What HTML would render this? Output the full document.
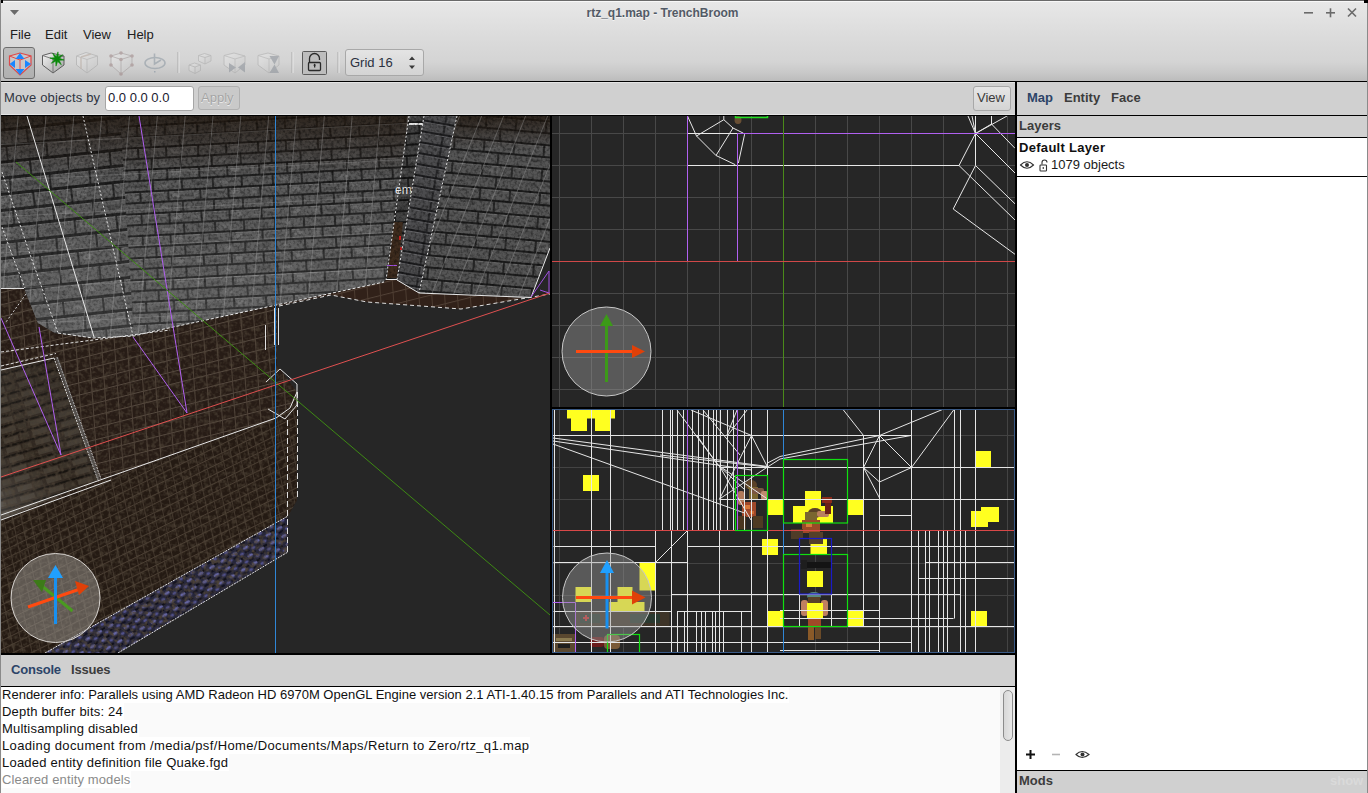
<!DOCTYPE html>
<html><head><meta charset="utf-8">
<style>
*{margin:0;padding:0;box-sizing:border-box}
html,body{width:1368px;height:793px;overflow:hidden;background:#d0d0d0;font-family:"Liberation Sans",sans-serif;font-size:13px;color:#1e1e1e}
.abs{position:absolute}
.tb{font-weight:bold;font-size:13px}
#top{left:0;top:0;width:1368px;height:81px;background:linear-gradient(#e8e8e8 0px,#dcdcdc 35px,#d4d4d4 62px,#c9c9c9 72px,#bcbcbc 81px)}
#title{left:0;top:6px;width:1325px;text-align:center;font-size:12px;font-weight:bold;color:#525a66;text-shadow:0 1px 0 #f4f4f4}
.menu{top:27px;font-size:13px;color:#202020}
#blk1{left:0;top:81px;width:1368px;height:1px;background:#000}
#movebar{left:1px;top:82px;width:1014px;height:33px;background:#d0d0d0;border-top:1px solid #e4e4e4;border-bottom:1px solid #e4e4e4}
#blk2{left:0;top:115px;width:1015px;height:1px;background:#000}
#vsep{left:1015px;top:81px;width:2px;height:712px;background:#000}
#leftedge{left:0;top:0;width:1px;height:793px;background:#8a8a8a}
.btn{background:linear-gradient(#e6e6e6,#d2d2d2);border:1px solid #a8a8a8;border-radius:3px;color:#3a3a3a}
#v3d{left:0px;top:115px;width:1015px;height:540px;background:#000}
#v2a{left:552px;top:116px;width:463px;height:291px;background:#262626;overflow:hidden}
#v2b{left:552px;top:409px;width:463px;height:244px;background:#262626;overflow:hidden}
#blk3{left:0;top:653px;width:1015px;height:2px;background:#000}
#contab{left:1px;top:655px;width:1014px;height:31px;background:#d0d0d0}
#blk4{left:0;top:686px;width:1015px;height:1px;background:#000}
#console{left:1px;top:687px;width:1014px;height:106px;background:#fafafa;overflow:hidden}
.cl{position:absolute;left:1px;font-size:13px;line-height:17px;color:#101010;white-space:nowrap;background:#fff;padding-right:1px}
#rp{left:1017px;top:82px;width:351px;height:711px;background:#fff}
</style></head><body>
<div id="top" class="abs"></div>
<div class="abs" style="left:0;top:0;width:1368px;height:1px;background:#6a6a6a"></div>
<div class="abs" style="left:1px;top:1px;width:1366px;height:1px;background:#f8f8f8"></div>
<div id="title" class="abs">rtz_q1.map - TrenchBroom</div>
<svg class="abs" style="left:9px;top:9px" width="11" height="8" viewBox="0 0 11 8"><polygon points="1,1 10,1 5.5,6" fill="#6a6a6a"/></svg>
<svg class="abs" style="left:1300px;top:6px" width="66" height="14" viewBox="0 0 66 14">
<rect x="4" y="6" width="9" height="1.6" fill="#6a6a6a"/>
<rect x="26" y="6" width="9" height="1.6" fill="#6a6a6a"/><rect x="29.7" y="2.3" width="1.6" height="9" fill="#6a6a6a"/>
<path d="M48,2.5 L56,10.5 M56,2.5 L48,10.5" stroke="#6a6a6a" stroke-width="1.6"/>
</svg>
<div class="abs menu" style="left:10px">File</div>
<div class="abs menu" style="left:45px">Edit</div>
<div class="abs menu" style="left:83px">View</div>
<div class="abs menu" style="left:127px">Help</div>
<div class="abs" style="left:3px;top:47px;width:32px;height:32px;border:1px solid #6e6e6e;border-radius:3px;background:linear-gradient(#bcbcbc,#b0b0b0)"></div>
<svg class="abs" style="left:0;top:44px" width="440" height="37" viewBox="0 44 440 37">
<defs>
<linearGradient id="cubeg" x1="0" y1="0" x2="1" y2="1"><stop offset="0" stop-color="#f4f4f4"/><stop offset="1" stop-color="#a0a0a0"/></linearGradient>
<linearGradient id="cubed" x1="0" y1="0" x2="1" y2="1"><stop offset="0" stop-color="#ececec"/><stop offset="1" stop-color="#c4c4c4"/></linearGradient>
</defs>
<!-- icon1 -->
<polygon points="9.5,56 20,53 31,56 31,65 20,75 9.5,65" fill="#d8d0d0" fill-opacity="0.6" stroke="#e04848" stroke-width="1.2"/>
<line x1="9.5" y1="56" x2="20" y2="60" stroke="#e04848" stroke-width="1"/><line x1="31" y1="56" x2="20" y2="60" stroke="#e04848" stroke-width="1"/>
<line x1="20" y1="60" x2="20" y2="69" stroke="#e05050" stroke-width="1"/>
<polygon points="20,53 15.5,59 24.5,59" fill="#1a86ff"/>
<polygon points="20,75 15.5,69 24.5,69" fill="#1a86ff"/>
<polygon points="9.5,64 15,60 15,68" fill="#1a86ff"/>
<polygon points="31,64 25,60 25,68" fill="#1a86ff"/>
<!-- icon2 -->
<polygon points="42.5,55.5 51,53 64,56 64,65 53,73 42.5,65" fill="url(#cubeg)" stroke="#505050" stroke-width="0.9"/>
<polyline points="42.5,55.5 53,59 53,73" fill="none" stroke="#707070" stroke-width="0.9"/><line x1="53" y1="59" x2="64" y2="56" stroke="#707070" stroke-width="0.9"/>
<polygon points="58.00,51.87 58.32,56.76 62.75,54.67 59.52,58.35 64.13,60.00 59.24,60.32 61.33,64.75 57.65,61.52 56.00,66.13 55.68,61.24 51.25,63.33 54.48,59.65 49.87,58.00 54.76,57.68 52.67,53.25 56.35,56.48" fill="#0a880a" stroke="#0a880a" stroke-width="0.6" stroke-linejoin="round"/>
<!-- icon3 disabled cube -->
<g opacity="0.55">
<polygon points="76.5,56 86,52.5 97.5,56 97.5,65 87,73 76.5,65" fill="url(#cubed)" stroke="#a0a0a0" stroke-width="0.9"/>
<polyline points="76.5,56 87,59.5 87,73" fill="none" stroke="#a8a8a8" stroke-width="0.9"/><line x1="87" y1="59.5" x2="97.5" y2="56" stroke="#a8a8a8" stroke-width="0.9"/>
<line x1="81" y1="57" x2="81" y2="69" stroke="#b8aaa0" stroke-width="1.4"/><line x1="81" y1="57" x2="91" y2="54" stroke="#b8aaa0" stroke-width="1.4"/>
</g>
<!-- icon4 vertex cube -->
<g opacity="0.6">
<polygon points="111,56 121,53 132,56 132,65 121,74 111,65" fill="url(#cubed)" stroke="#a09898" stroke-width="0.9"/>
<polyline points="111,56 121,59.5 121,74" fill="none" stroke="#a09898" stroke-width="0.9"/><line x1="121" y1="59.5" x2="132" y2="56" stroke="#a09898" stroke-width="0.9"/>
<g fill="#a08a8a"><circle cx="111" cy="56" r="1.8"/><circle cx="121" cy="53" r="1.8"/><circle cx="132" cy="56" r="1.8"/><circle cx="121" cy="59.5" r="1.8"/><circle cx="111" cy="65" r="1.8"/><circle cx="132" cy="65" r="1.8"/><circle cx="121" cy="74" r="1.8"/></g>
</g>
<!-- icon5 rotate -->
<g opacity="0.55" fill="none" stroke="#8a96a0" stroke-width="1.6">
<ellipse cx="155" cy="63" rx="10" ry="5.5"/>
<polyline points="154.5,53.5 154.5,64 161,60"/>
</g>
<rect x="154" y="71" width="1.5" height="1.5" fill="#a0a8b0"/>
<!-- separators -->
<g><rect x="177.5" y="52" width="1" height="21" fill="#aaaaaa"/><rect x="178.5" y="52" width="1" height="21" fill="#e8e8e8"/>
<rect x="291.5" y="52" width="1" height="21" fill="#aaaaaa"/><rect x="292.5" y="52" width="1" height="21" fill="#e8e8e8"/>
<rect x="337.5" y="52" width="1" height="21" fill="#aaaaaa"/><rect x="338.5" y="52" width="1" height="21" fill="#e8e8e8"/></g>
<!-- icon6 two cubes -->
<g opacity="0.5" stroke="#9c9c9c" stroke-width="0.8">
<polygon points="189,65 194.5,63 200.5,65 200.5,70.5 195,73.5 189,70.5" fill="url(#cubed)"/>
<polyline points="189,65 195,67 195,73.5" fill="none"/><line x1="195" y1="67" x2="200.5" y2="65"/>
<polygon points="198.5,55.5 204.5,53.5 211,55.5 211,61 205,64 198.5,61" fill="url(#cubed)"/>
<polyline points="198.5,55.5 205,57.5 205,64" fill="none"/><line x1="205" y1="57.5" x2="211" y2="55.5"/>
</g>
<!-- icon7 -->
<g opacity="0.55">
<polygon points="224,55.5 234,53 245,56 245,65 235,73 224,65" fill="url(#cubed)" stroke="#a0a0a0" stroke-width="0.8"/>
<polyline points="224,55.5 235,59 235,73" fill="none" stroke="#a8a8a8" stroke-width="0.8"/><line x1="235" y1="59" x2="245" y2="56" stroke="#a8a8a8" stroke-width="0.8"/>
<polygon points="229,63 236,67.5 229,72.5" fill="#8a9098"/><polygon points="245,62 238,67.5 245,72.5" fill="#8a9098"/>
</g>
<!-- icon8 -->
<g opacity="0.55">
<polygon points="258,55.5 268,53 279,56 279,65 269,73 258,65" fill="url(#cubed)" stroke="#a0a0a0" stroke-width="0.8"/>
<polyline points="258,55.5 269,59 269,73" fill="none" stroke="#a8a8a8" stroke-width="0.8"/><line x1="269" y1="59" x2="279" y2="56" stroke="#a8a8a8" stroke-width="0.8"/>
<polygon points="269.5,56 279,56 274.5,64.5" fill="#8a9098"/><polygon points="269.5,73 279,73 274.5,64.5" fill="#8a9098"/>
</g>
<!-- lock button -->
<rect x="302.5" y="51.5" width="24" height="23" rx="1" fill="#bdbdbd" stroke="#5a5a5a"/>
<path d="M309.5,63 V58.5 a5,5 0 0 1 10,0 V60" fill="none" stroke="#2a2a2a" stroke-width="1.3"/>
<rect x="308.5" y="62.5" width="12" height="8" rx="1" fill="none" stroke="#2a2a2a" stroke-width="1.3"/>
<rect x="314" y="64.5" width="1.3" height="3" fill="#2a2a2a"/><polygon points="314.6,63.5 313.2,65.5 316,65.5" fill="#2a2a2a"/>
</svg>
<div class="abs" style="left:345px;top:49px;width:79px;height:27px;border:1px solid #a8a8a8;border-radius:3px;background:linear-gradient(#e4e4e4,#d4d4d4)"></div>
<div class="abs" style="left:350px;top:55px;font-size:13px;color:#2a3040">Grid 16</div>
<svg class="abs" style="left:407px;top:55px" width="10" height="16" viewBox="0 0 10 16"><polygon points="5,1.5 2,5 8,5" fill="#3a3a3a"/><polygon points="5,14 2,10.5 8,10.5" fill="#3a3a3a"/></svg>
<div id="blk1" class="abs"></div>
<div id="movebar" class="abs"></div>
<div class="abs" style="left:4px;top:90px;color:#2e3440;letter-spacing:0.15px">Move objects by</div>
<div class="abs" style="left:105px;top:86px;width:89px;height:25px;background:#fff;border:1px solid #a6a6a6;border-radius:3px"></div>
<div class="abs" style="left:108px;top:90px;color:#1a2030">0.0 0.0 0.0</div>
<div class="abs" style="left:198px;top:86px;width:42px;height:24px;background:#c9c9c9;border:1px solid #b0b0b0;border-radius:3px"></div>
<div class="abs" style="left:201px;top:90px;color:#a4a4a4;text-shadow:0 1px 0 #ececec">Apply</div>
<div class="abs" style="left:973px;top:86px;width:38px;height:25px;border:1px solid #a8a8a8;border-radius:3px;background:linear-gradient(#e6e6e6,#d4d4d4)"></div>
<div class="abs" style="left:977px;top:90px;color:#3a3a3a">View</div>
<div id="blk2" class="abs"></div>
<div id="v3d" class="abs"></div>
<svg class="abs" style="left:1px;top:116px" width="549" height="537" viewBox="1 116 549 537">
<defs>
<pattern id="brickA" width="60" height="22" patternUnits="userSpaceOnUse" patternTransform="rotate(-3)">
<rect width="60" height="22" fill="#585858"/>
<rect y="0" width="60" height="2" fill="#1c1c1c"/>
<rect y="11" width="60" height="2" fill="#202020"/>
<rect y="2" width="60" height="1" fill="#6c6c6c"/>
<rect x="9" y="2" width="2" height="9" fill="#262626"/>
<rect x="37" y="2" width="2" height="9" fill="#2a2a2a"/>
<rect x="22" y="13" width="2" height="9" fill="#262626"/>
<rect x="51" y="13" width="2" height="9" fill="#2a2a2a"/>
<rect x="2" y="5" width="6" height="3" fill="#636363"/>
<rect x="16" y="6" width="10" height="3" fill="#4a4a4a"/>
<rect x="42" y="4" width="8" height="4" fill="#686868"/>
<rect x="4" y="15" width="12" height="4" fill="#4c4c4c"/>
<rect x="30" y="16" width="8" height="3" fill="#666"/>
</pattern>
<pattern id="gridB" width="22" height="40" patternUnits="userSpaceOnUse" patternTransform="skewX(-22)">
<rect x="0" y="0" width="1" height="40" fill="#a8a8a8" opacity="0.35"/>
</pattern>
<pattern id="gridA" width="28" height="36" patternUnits="userSpaceOnUse" patternTransform="rotate(-3) skewX(-8)">
<rect x="0" y="0" width="1" height="36" fill="#b0b0b0" opacity="0.32"/>
<rect x="0" y="0" width="28" height="1" fill="#b0b0b0" opacity="0.25"/>
</pattern>
<pattern id="brickAL" width="80" height="32" patternUnits="userSpaceOnUse" patternTransform="rotate(-6)">
<rect width="80" height="32" fill="#585858"/>
<rect y="0" width="80" height="3" fill="#1c1c1c"/>
<rect y="16" width="80" height="3" fill="#202020"/>
<rect y="3" width="80" height="1" fill="#707070"/>
<rect y="19" width="80" height="1" fill="#6a6a6a"/>
<rect x="12" y="3" width="2" height="13" fill="#262626"/>
<rect x="50" y="3" width="2" height="13" fill="#2a2a2a"/>
<rect x="30" y="19" width="2" height="13" fill="#262626"/>
<rect x="70" y="19" width="2" height="13" fill="#2a2a2a"/>
<rect x="3" y="7" width="8" height="4" fill="#646464"/>
<rect x="22" y="8" width="14" height="4" fill="#4a4a4a"/>
<rect x="56" y="6" width="10" height="5" fill="#696969"/>
<rect x="5" y="23" width="16" height="5" fill="#4c4c4c"/>
<rect x="40" y="24" width="10" height="4" fill="#676767"/>
</pattern>
<pattern id="brickB" width="60" height="24" patternUnits="userSpaceOnUse" patternTransform="rotate(5)">
<rect width="60" height="24" fill="#555"/>
<rect y="0" width="60" height="2" fill="#1c1c1c"/>
<rect y="12" width="60" height="2" fill="#1e1e1e"/>
<rect y="2" width="60" height="1" fill="#6a6a6a"/>
<rect x="14" y="2" width="2" height="10" fill="#282828"/>
<rect x="44" y="2" width="2" height="10" fill="#2c2c2c"/>
<rect x="29" y="14" width="2" height="10" fill="#282828"/>
<rect x="22" y="6" width="9" height="3" fill="#616161"/>
<rect x="3" y="16" width="8" height="3" fill="#4a4a4a"/>
</pattern>
<pattern id="pillar" width="28" height="11" patternUnits="userSpaceOnUse" patternTransform="rotate(10)">
<rect width="28" height="11" fill="#4c4c4e"/>
<rect y="0" width="28" height="2" fill="#1e1e20"/>
<rect y="2" width="28" height="1" fill="#636366"/>
<rect x="11" y="3" width="2" height="8" fill="#2a2a2c"/>
<rect x="16" y="5" width="7" height="3" fill="#575759"/>
</pattern>
<pattern id="tile" width="13" height="12" patternUnits="userSpaceOnUse" patternTransform="matrix(0.97,-0.242,0.07,0.998,0,0)">
<rect width="13" height="12" fill="#271c16"/>
<rect x="0" y="0" width="13" height="1" fill="#564a40"/>
<rect x="0" y="0" width="1" height="12" fill="#4e4238"/>
</pattern>
<pattern id="tileF" width="9" height="8" patternUnits="userSpaceOnUse" patternTransform="rotate(-26) skewX(-14)">
<rect width="9" height="8" fill="#241a13"/>
<rect x="0" y="0" width="9" height="1" fill="#4a3e33"/>
<rect x="0" y="0" width="1" height="8" fill="#42372d"/>
</pattern>
<pattern id="blueP" width="13" height="9" patternUnits="userSpaceOnUse" patternTransform="rotate(-30)">
<rect width="13" height="9" fill="#26263a"/>
<ellipse cx="4" cy="3" rx="3" ry="1.6" fill="#6464a0"/>
<ellipse cx="10.5" cy="7" rx="2.2" ry="1.4" fill="#50508a"/>
<rect x="7" y="1" width="4" height="2" fill="#101018"/>
<rect x="1" y="6" width="5" height="2" fill="#121220"/>
</pattern>
<filter id="noiseB" x="0" y="0" width="100%" height="100%"><feTurbulence type="fractalNoise" baseFrequency="0.3" numOctaves="2" seed="7"/><feColorMatrix type="matrix" values="0 0 0 0 0.42  0 0 0 0 0.42  0 0 0 0 0.66  0 0 0 3.2 -1.55"/></filter>
<filter id="noiseT" x="0" y="0" width="100%" height="100%"><feTurbulence type="fractalNoise" baseFrequency="0.25" numOctaves="2" seed="11"/><feColorMatrix type="matrix" values="0 0 0 0 0.08  0 0 0 0 0.06  0 0 0 0 0.04  0 0 0 -3 1.75"/></filter>
<pattern id="brickC" width="30" height="10" patternUnits="userSpaceOnUse" patternTransform="rotate(-16)">
<rect width="30" height="10" fill="#2a2119"/>
<rect y="0" width="30" height="2" fill="#100c08"/>
<rect x="2" y="3" width="15" height="5" fill="#3e362c"/>
<rect x="19" y="3" width="9" height="5" fill="#342c22"/>
</pattern>
<linearGradient id="insetg" x1="0.6" y1="0" x2="0.2" y2="1"><stop offset="0" stop-color="#1a1410" stop-opacity="0.5"/><stop offset="0.6" stop-color="#808080" stop-opacity="0.05"/><stop offset="1" stop-color="#a0a0a0" stop-opacity="0.3"/></linearGradient>
<pattern id="blue" width="11" height="9" patternUnits="userSpaceOnUse" patternTransform="rotate(-30)">
<rect width="11" height="9" fill="#2e2e42"/>
<rect x="1" y="1" width="4" height="3" fill="#5e5e90"/>
<rect x="6" y="4" width="3" height="2" fill="#7878b0"/>
<rect x="4" y="6" width="4" height="2" fill="#18182a"/>
</pattern>
<filter id="noise" x="0" y="0" width="100%" height="100%"><feTurbulence type="fractalNoise" baseFrequency="0.35" numOctaves="2" seed="3"/><feColorMatrix type="matrix" values="0 0 0 0 0  0 0 0 0 0  0 0 0 0 0  0 0 0 -2.2 1.3"/></filter>
<linearGradient id="lowlight" gradientUnits="userSpaceOnUse" x1="0" y1="170" x2="0" y2="335"><stop offset="0" stop-color="#c8c8c8" stop-opacity="0"/><stop offset="1" stop-color="#c8c8c8" stop-opacity="0.16"/></linearGradient>
<linearGradient id="topdark" x1="0" y1="0" x2="0" y2="1">
<stop offset="0" stop-color="#22180f" stop-opacity="0.8"/>
<stop offset="1" stop-color="#241a14" stop-opacity="0"/>
</linearGradient>
<clipPath id="wallAclip"><polygon points="1,116 409,116 386,272 384,282 150,332 134,336 93,338 55,333 38,323 24,288 1,288"/></clipPath>
<clipPath id="wallBclip"><polygon points="409,116 550,116 550,248 531,298 419,293 397,280 386,280"/></clipPath>
</defs>
<rect x="1" y="116" width="549" height="537" fill="#262626"/>
<!-- brown platform -->
<polygon points="1,280 24,288 38,323 55,333 93,338 134,336 150,332 277,305 277,365 297,392 297,500 288,516 45,653 1,653" fill="url(#tile)"/>
<clipPath id="platclip"><polygon points="1,280 24,288 38,323 55,333 93,338 134,336 150,332 277,305 277,365 297,392 297,500 288,516 45,653 1,653"/></clipPath>
<polygon points="1,518 276,418 290,408 297,392 297,500 288,516 45,653 1,653" fill="url(#tileF)"/>
<rect x="1" y="280" width="297" height="373" fill="#000" filter="url(#noiseT)" opacity="0.6" clip-path="url(#platclip)"/>
<!-- inner brick inset lower left -->
<polygon points="1,370 54,358 98,480 1,520" fill="url(#brickC)"/>
<polygon points="1,370 54,358 98,480 1,520" fill="url(#insetg)"/>
<clipPath id="insetclip"><polygon points="1,370 54,358 98,480 1,520"/></clipPath>
<rect x="1" y="358" width="98" height="162" fill="#000" filter="url(#noiseT)" opacity="0.6" clip-path="url(#insetclip)"/>
<!-- blue strip -->
<clipPath id="blueclip"><polygon points="45,653 288,516 288,552 118,653"/></clipPath>
<polygon points="45,653 288,516 288,552 118,653" fill="url(#blueP)"/>
<rect x="45" y="516" width="244" height="137" fill="#000" filter="url(#noiseT)" opacity="0.85" clip-path="url(#blueclip)"/>
<!-- brown floor strip under right walls -->
<polygon points="277,305 384,282 386,280 397,280 419,293 531,298 550,290 550,294 461,309 421,306 367,302 331,295 277,306" fill="url(#tile)"/>
<polygon points="277,305 384,282 386,280 397,280 419,293 531,298 550,290 550,294 461,309 421,306 367,302 331,295 277,306" fill="#4a3020" opacity="0.3"/>
<!-- wall A -->
<polygon points="1,116 409,116 386,272 384,282 150,332 134,336 93,338 55,333 38,323 24,288 1,288" fill="url(#brickA)"/>
<polygon points="1,116 120,116 134,336 93,338 55,333 38,323 24,288 1,288" fill="url(#brickAL)"/>
<polygon points="1,116 409,116 400,175 1,175" fill="url(#topdark)"/>
<rect x="1" y="116" width="409" height="225" fill="#000" filter="url(#noise)" opacity="0.45" clip-path="url(#wallAclip)"/>
<rect x="1" y="116" width="409" height="225" fill="url(#gridA)" clip-path="url(#wallAclip)"/>
<rect x="1" y="116" width="560" height="225" fill="url(#lowlight)" clip-path="url(#wallAclip)"/>
<rect x="385" y="116" width="165" height="185" fill="url(#lowlight)" clip-path="url(#wallBclip)"/>
<!-- gap -->
<polygon points="409,116 424,116 397,280 386,280" fill="url(#brickA)"/>
<polygon points="409,116 424,116 397,280 386,280" fill="#000" opacity="0.25"/>
<polygon points="394,222 403,222 397,278 387,278" fill="#3e2c1e"/>
<text x="395" y="194" font-family="Liberation Sans" font-size="12" fill="#e8e8e8">em</text>
<rect x="409" y="123" width="15" height="2" fill="#e8e8e8"/>
<rect x="399" y="236" width="2" height="4" fill="#d02020"/><rect x="400" y="247" width="2" height="3" fill="#d02020"/>
<rect x="387" y="265" width="10" height="1" fill="#a050e0"/>
<!-- pillar face -->
<polygon points="424,116 457,116 419,293 397,280" fill="url(#pillar)"/>
<!-- wall B -->
<polygon points="457,116 550,116 550,248 531,298 419,293" fill="url(#brickB)"/>
<polygon points="457,116 550,116 550,150 450,150" fill="url(#topdark)"/>
<rect x="385" y="116" width="165" height="185" fill="#000" filter="url(#noise)" opacity="0.45" clip-path="url(#wallBclip)"/>
<polygon points="457,116 550,116 550,248 531,298 419,293" fill="url(#gridB)"/>
<!-- lines -->
<g fill="none" stroke-width="1">
<line x1="27" y1="116" x2="94" y2="337" stroke="#e8e8e8"/>
<line x1="83" y1="116" x2="133" y2="336" stroke="#e0e0e0" stroke-dasharray="2,2"/>
<polyline points="2,172 32,260 58,333" stroke="#e0e0e0" stroke-dasharray="2,2"/>
<polyline points="2,227 14,260 25,288" stroke="#e0e0e0" stroke-dasharray="2,2"/>
<line x1="26" y1="294" x2="6" y2="322" stroke="#d0d0d0" stroke-dasharray="2,2"/>
<polyline points="1,288.5 24,288.5" stroke="#e0e0e0"/>
<polyline points="58,333 93,338 134,336 150,332 384,282" stroke="#e8e8e8" stroke-dasharray="3,2"/>
<line x1="409" y1="116" x2="386" y2="280" stroke="#e0e0e0" stroke-dasharray="2,2"/>
<line x1="424" y1="116" x2="397" y2="280" stroke="#e0e0e0" stroke-dasharray="2,2"/>
<line x1="457" y1="116" x2="419" y2="293" stroke="#e0e0e0" stroke-dasharray="2,2"/>
<line x1="386" y1="279.5" x2="397" y2="279.5" stroke="#e8e8e8"/>
<polyline points="397,280 419,293 531,297.5 550,248" stroke="#e8e8e8"/>
<polyline points="279,306 331,295 367,302 421,306 461,309 550,294" stroke="#e0e0e0" stroke-dasharray="4,3"/>
<line x1="1" y1="352" x2="170" y2="330" stroke="#e0e0e0" stroke-dasharray="3,2"/>
<line x1="1" y1="370" x2="54" y2="358" stroke="#e8e8e8"/>
<line x1="1" y1="366" x2="56" y2="353.5" stroke="#d8d8d8" stroke-dasharray="3,2"/>
<line x1="54" y1="358" x2="98" y2="480" stroke="#e0e0e0" stroke-dasharray="2,1"/>
<line x1="57" y1="357" x2="101" y2="479" stroke="#d8d8d8" stroke-dasharray="2,1"/>
<polygon points="55,358 58,357 100,479 98,480" fill="#6a6a6a" opacity="0.6"/>
<line x1="1" y1="515" x2="276" y2="418" stroke="#e8e8e8"/>
<line x1="1" y1="520" x2="111" y2="480" stroke="#e8e8e8"/>
<polyline points="276,418 290,408 297,392" stroke="#e8e8e8"/>
<polyline points="266,382 280,369 297,384 297,405 285,419 268,409" stroke="#e0e0e0"/>
<line x1="274.5" y1="308" x2="274.5" y2="345" stroke="#e0e0e0"/>
<line x1="278.5" y1="308" x2="278.5" y2="345" stroke="#e0e0e0"/>
<line x1="265.5" y1="325" x2="265.5" y2="350" stroke="#e0e0e0"/>
<line x1="297.5" y1="392" x2="297.5" y2="500" stroke="#e0e0e0" stroke-dasharray="6,3"/>
<line x1="287.5" y1="420" x2="287.5" y2="552" stroke="#e0e0e0" stroke-dasharray="6,3"/>
<line x1="45" y1="653" x2="288" y2="516" stroke="#e0e0e0" stroke-dasharray="2,1"/>
<line x1="118" y1="653" x2="288" y2="552" stroke="#e0e0e0" stroke-dasharray="2,1"/>
<line x1="139" y1="116" x2="187" y2="413" stroke="#b060f0"/>
<line x1="133" y1="337" x2="187" y2="413" stroke="#b060f0"/>
<line x1="1" y1="318" x2="61" y2="455" stroke="#b060f0"/>
<line x1="39" y1="327" x2="61" y2="455" stroke="#b060f0"/>
<line x1="16" y1="162" x2="550" y2="615" stroke="#3e8a14"/>
<line x1="1" y1="477" x2="550" y2="293" stroke="#e05050"/>
<polyline points="531,297 549,271 549,293 540,290" stroke="#a050e0"/>
<line x1="275.5" y1="116" x2="275.5" y2="653" stroke="#2f86d6"/>
</g>
<!-- gizmo -->
<circle cx="55.5" cy="598" r="44.5" fill="#9a9590" fill-opacity="0.5" stroke="#d8d4d0" stroke-width="1"/>
<line x1="72.5" y1="611" x2="42" y2="586" stroke="#4a9a20" stroke-width="3"/>
<polygon points="33,580 46,580 42,592" fill="#3d7a18"/>
<line x1="28" y1="607" x2="80" y2="589" stroke="#ff4a10" stroke-width="3"/>
<polygon points="89,586 75,581 79,595" fill="#e04008"/>
<line x1="55.5" y1="624" x2="55.5" y2="576" stroke="#1890f0" stroke-width="3"/>
<polygon points="55.5,565 48,578 63,578" fill="#20a0ff"/>
</svg>

<svg class="abs" style="left:552px;top:116px" width="463" height="291" viewBox="552 116 463 291">
<rect x="552" y="116" width="463" height="291" fill="#262626"/>
<g stroke="#484848" stroke-width="1"><line x1="559.5" y1="116" x2="559.5" y2="407"/><line x1="591.5" y1="116" x2="591.5" y2="407"/><line x1="623.5" y1="116" x2="623.5" y2="407"/><line x1="655.5" y1="116" x2="655.5" y2="407"/><line x1="687.5" y1="116" x2="687.5" y2="407"/><line x1="719.5" y1="116" x2="719.5" y2="407"/><line x1="751.5" y1="116" x2="751.5" y2="407"/><line x1="783.5" y1="116" x2="783.5" y2="407"/><line x1="815.5" y1="116" x2="815.5" y2="407"/><line x1="847.5" y1="116" x2="847.5" y2="407"/><line x1="879.5" y1="116" x2="879.5" y2="407"/><line x1="911.5" y1="116" x2="911.5" y2="407"/><line x1="943.5" y1="116" x2="943.5" y2="407"/><line x1="975.5" y1="116" x2="975.5" y2="407"/><line x1="1007.5" y1="116" x2="1007.5" y2="407"/><line x1="552" y1="133.5" x2="1015" y2="133.5"/><line x1="552" y1="165.5" x2="1015" y2="165.5"/><line x1="552" y1="197.5" x2="1015" y2="197.5"/><line x1="552" y1="229.5" x2="1015" y2="229.5"/><line x1="552" y1="261.5" x2="1015" y2="261.5"/><line x1="552" y1="293.5" x2="1015" y2="293.5"/><line x1="552" y1="325.5" x2="1015" y2="325.5"/><line x1="552" y1="357.5" x2="1015" y2="357.5"/><line x1="552" y1="389.5" x2="1015" y2="389.5"/></g>
<g fill="none" stroke="#e8e8e8" stroke-width="1">
<line x1="687.5" y1="133.5" x2="737.5" y2="133.5"/>
<line x1="687.5" y1="165.5" x2="959" y2="165.5"/>
<polyline points="687.5,116 696.5,136 723.8,119.7 723.8,116"/>
<polyline points="723.8,119.7 733,128 743,133 744.6,134.3 738.4,163"/>
<polyline points="696.5,136 716,155.5 733,128"/>
<polyline points="716,155.5 735.3,164.7"/>
<polyline points="959,165.5 975.5,133.5 975.5,165.5 953.2,209 1015,254.3"/>
<line x1="975.5" y1="165.5" x2="1015" y2="203.8"/>
<polyline points="959,165.5 969.3,175.6 1015,220"/>
<line x1="975.5" y1="133.5" x2="1015" y2="173"/>
<polyline points="975.5,133.5 991.5,124 1015,148.3"/>
<polyline points="975.5,133.5 1007,116"/>
<polyline points="975.5,133.5 968,116"/>
<polyline points="975.5,133.5 972,116"/>
<line x1="975.5" y1="116" x2="975.5" y2="133.5"/>
<line x1="991.5" y1="116" x2="991.5" y2="124"/>
</g>
<g stroke="#b060f0" stroke-width="1" fill="none">
<line x1="687.5" y1="116" x2="687.5" y2="261"/>
<line x1="737.5" y1="133.5" x2="737.5" y2="261"/>
<line x1="737.5" y1="133.5" x2="1015" y2="133.5"/>
</g>
<line x1="783.5" y1="116" x2="783.5" y2="407" stroke="#4a8a1a"/>
<line x1="552" y1="261.5" x2="1015" y2="261.5" stroke="#d04848"/>
<ellipse cx="738" cy="120" rx="3.5" ry="4" fill="#7a5a38" opacity="0.8"/>
<polyline points="735.5,116 735.5,117.5 767.5,117.5 767.5,116" fill="none" stroke="#20e020" stroke-width="1.5"/>
<circle cx="606.5" cy="351.5" r="44.5" fill="#a0a0a0" fill-opacity="0.42" stroke="#c8c8c8" stroke-width="1"/>
<line x1="606.5" y1="382" x2="606.5" y2="324" stroke="#3c9a18" stroke-width="3"/>
<polygon points="606.5,314 600,326 613,326" fill="#3c9a18"/>
<line x1="576" y1="351.5" x2="635" y2="351.5" stroke="#ff4a10" stroke-width="3"/>
<polygon points="645,351.5 632,345 632,358" fill="#e04008"/>
</svg>

<svg class="abs" style="left:552px;top:409px" width="463" height="244" viewBox="552 409 463 244">
<rect x="552" y="409" width="463" height="244" fill="#262626"/>
<g stroke="#434343" stroke-width="1"><line x1="559.5" y1="409.5" x2="559.5" y2="652.5"/><line x1="591.5" y1="409.5" x2="591.5" y2="652.5"/><line x1="623.5" y1="409.5" x2="623.5" y2="652.5"/><line x1="655.5" y1="409.5" x2="655.5" y2="652.5"/><line x1="687.5" y1="409.5" x2="687.5" y2="652.5"/><line x1="719.5" y1="409.5" x2="719.5" y2="652.5"/><line x1="751.5" y1="409.5" x2="751.5" y2="652.5"/><line x1="783.5" y1="409.5" x2="783.5" y2="652.5"/><line x1="815.5" y1="409.5" x2="815.5" y2="652.5"/><line x1="847.5" y1="409.5" x2="847.5" y2="652.5"/><line x1="879.5" y1="409.5" x2="879.5" y2="652.5"/><line x1="911.5" y1="409.5" x2="911.5" y2="652.5"/><line x1="943.5" y1="409.5" x2="943.5" y2="652.5"/><line x1="975.5" y1="409.5" x2="975.5" y2="652.5"/><line x1="1007.5" y1="409.5" x2="1007.5" y2="652.5"/><line x1="552.5" y1="435.5" x2="1014.5" y2="435.5"/><line x1="552.5" y1="467.5" x2="1014.5" y2="467.5"/><line x1="552.5" y1="499.5" x2="1014.5" y2="499.5"/><line x1="552.5" y1="563.5" x2="1014.5" y2="563.5"/><line x1="552.5" y1="595.5" x2="1014.5" y2="595.5"/><line x1="552.5" y1="627.5" x2="1014.5" y2="627.5"/></g>






<g fill="#ffff20">
<polygon points="567,409.5 615,409.5 615,418.5 611,418.5 611,431 595,431 595,418.5 587,418.5 587,431 571,431 571,418.5 567,418.5"/>
<rect x="583" y="475" width="16" height="16"/>
<rect x="768" y="500" width="15" height="15"/>
<rect x="805" y="491" width="16" height="16"/>
<rect x="793" y="506" width="40" height="17"/>
<rect x="848" y="500" width="15" height="15"/>
<rect x="976" y="451" width="15" height="16"/>
<rect x="971" y="511" width="17" height="16"/>
<rect x="981" y="507" width="18" height="15"/>
<rect x="810.5" y="539" width="16.5" height="16"/>
<rect x="807" y="571" width="16" height="16"/>
<rect x="847.5" y="611" width="15.5" height="15.5"/>
<rect x="971" y="611" width="16" height="15.5"/>
<rect x="762" y="539" width="16" height="16"/>
<rect x="639.5" y="562.5" width="16" height="28"/>
<rect x="575.5" y="587" width="16" height="15"/>
<rect x="617.5" y="587" width="15" height="15"/>
<rect x="609.5" y="602" width="35" height="20"/>
<rect x="767" y="611" width="16" height="15"/>
</g>
<!-- monsters approx -->
<g>
<g>
<ellipse cx="751" cy="485" rx="6" ry="5" fill="#5a4228"/>
<rect x="748" y="487" width="10" height="13" fill="#7a6630"/>
<rect x="745" y="489" width="4" height="12" fill="#2a2a2a"/>
<rect x="738" y="491" width="6" height="14" rx="2" fill="#b07a5a"/>
<rect x="752" y="488" width="12" height="6" rx="2" fill="#7a5640"/>
<rect x="761" y="491" width="7" height="9" rx="2" fill="#c08a70"/>
<rect x="742" y="502" width="14" height="15" fill="#a0482a"/>
<rect x="745" y="505" width="5" height="4" fill="#d8783a"/>
<rect x="750" y="511" width="4" height="3" fill="#d06a30"/>
<rect x="737" y="516" width="9" height="13" fill="#4a3620"/>
<rect x="753" y="516" width="10" height="12" fill="#4e3a22"/>
</g>
<g>
<ellipse cx="815" cy="513" rx="7" ry="5" fill="#5a4228"/>
<rect x="805" y="512" width="12" height="9" fill="#7a6630"/>
<rect x="817" y="511" width="12" height="6" rx="2" fill="#b88060"/>
<rect x="825" y="500" width="6" height="14" fill="#6a2018"/>
<rect x="822" y="497" width="10" height="6" fill="#8a2a1a"/>
<rect x="802" y="520" width="18" height="13" fill="#9a4a28"/>
<rect x="806" y="523" width="6" height="4" fill="#d8783a"/>
<rect x="791" y="529" width="12" height="10" fill="#4e3c28"/>
<rect x="809" y="532" width="14" height="12" fill="#54402a"/>
</g>
<rect x="803" y="562" width="29" height="6" fill="#141414"/>
<rect x="801" y="560" width="6" height="9" fill="#1e1e1e"/>
<g>
<ellipse cx="814" cy="596" rx="7" ry="4" fill="#5a8a80"/>
<rect x="808" y="597" width="12" height="8" fill="#5a4228"/>
<rect x="801" y="600" width="7" height="16" rx="3" fill="#c08060"/>
<rect x="821" y="600" width="7" height="16" rx="3" fill="#c08060"/>
<rect x="808" y="617" width="13" height="9" fill="#a04a28"/>
<rect x="808" y="626" width="6" height="14" fill="#8a5a28"/>
<rect x="815" y="626" width="6" height="13" fill="#6a4a28"/>
</g>
</g>
<rect x="807" y="603" width="16" height="16" fill="#ffff20"/>
<rect x="553" y="634" width="22" height="18" fill="#5a4830"/>
<rect x="556" y="638" width="16" height="3" fill="#8a7a50"/><rect x="558" y="644" width="12" height="4" fill="#1e1e1e"/>
<rect x="590" y="637" width="14" height="10" rx="3" fill="#6a1a1a"/><rect x="604" y="635" width="16" height="14" rx="4" fill="#7a5a38"/>
<rect x="575.5" y="611" width="94" height="15" fill="#3e3428"/>
<rect x="580" y="614" width="20" height="9" fill="#2a3a30"/><rect x="630" y="614" width="30" height="9" fill="#2a3a30"/>
<rect x="583" y="617" width="6" height="2" fill="#c03030"/><rect x="585" y="615" width="2" height="6" fill="#c03030"/>
<g fill="none" stroke="#e6e6e6" stroke-width="1"><line x1="554.5" y1="409.5" x2="554.5" y2="652.5"/><line x1="591.5" y1="409.5" x2="591.5" y2="652.5"/><line x1="610.5" y1="409.5" x2="610.5" y2="652.5"/><line x1="662.5" y1="409.5" x2="662.5" y2="530.5"/><line x1="670.5" y1="409.5" x2="670.5" y2="530.5"/><line x1="672.5" y1="409.5" x2="672.5" y2="530.5"/><line x1="677.5" y1="409.5" x2="677.5" y2="530.5"/><line x1="683.5" y1="409.5" x2="683.5" y2="530.5"/><line x1="692.5" y1="409.5" x2="692.5" y2="530.5"/><line x1="698.5" y1="409.5" x2="698.5" y2="530.5"/><line x1="703.5" y1="409.5" x2="703.5" y2="530.5"/><line x1="708.5" y1="409.5" x2="708.5" y2="530.5"/><line x1="713.5" y1="409.5" x2="713.5" y2="530.5"/><line x1="716.5" y1="409.5" x2="716.5" y2="530.5"/><line x1="720.5" y1="409.5" x2="720.5" y2="530.5"/><line x1="727.5" y1="409.5" x2="727.5" y2="530.5"/><line x1="733.5" y1="409.5" x2="733.5" y2="530.5"/><line x1="744.5" y1="409.5" x2="744.5" y2="530.5"/><line x1="751.5" y1="409.5" x2="751.5" y2="530.5"/><line x1="767.5" y1="409.5" x2="767.5" y2="530.5"/><line x1="552.5" y1="435.5" x2="911.5" y2="435.5"/><line x1="719.5" y1="467.5" x2="1014.5" y2="467.5"/><line x1="719.5" y1="499.5" x2="1014.5" y2="499.5"/><line x1="553" y1="438" x2="767.5" y2="466.5"/><line x1="553" y1="444" x2="744.5" y2="513"/><line x1="553" y1="441" x2="751.5" y2="470"/><line x1="660" y1="455" x2="767.5" y2="467"/><line x1="767.5" y1="467" x2="780" y2="459"/><line x1="767.5" y1="463" x2="780" y2="456.5"/><line x1="751.5" y1="435.5" x2="719.5" y2="499"/><line x1="751.5" y1="435.5" x2="767.5" y2="467"/><line x1="691" y1="410" x2="751.5" y2="435.5"/><line x1="677" y1="410" x2="718" y2="465"/><line x1="696.5" y1="435" x2="718" y2="465"/><line x1="718" y1="465" x2="767.5" y2="499"/><line x1="767.5" y1="467" x2="719.5" y2="499"/><line x1="718" y1="465" x2="745" y2="490"/><line x1="747" y1="410" x2="728" y2="435"/><line x1="737" y1="410" x2="727" y2="435"/><line x1="720" y1="467" x2="751" y2="520"/><line x1="703" y1="410" x2="740" y2="455"/><line x1="780" y1="456.5" x2="879.5" y2="435.5"/><line x1="780" y1="459" x2="911" y2="435.5"/><polyline points="942.5,409.5 879.5,435.5 911.5,467.5 954,409.5"/><polyline points="843,409.5 863.5,435.5 863.5,467.5 879.5,435.5"/><polyline points="863.5,467.5 879.5,482 911.5,467.5"/><polyline points="863.5,467.5 879.5,498"/><line x1="863.5" y1="435.5" x2="863.5" y2="626.5"/><line x1="879.5" y1="409.5" x2="879.5" y2="652.5"/><line x1="911.5" y1="409.5" x2="911.5" y2="652.5"/><line x1="954.5" y1="409.5" x2="954.5" y2="618.5"/><line x1="960.5" y1="409.5" x2="960.5" y2="652.5"/><line x1="975.5" y1="409.5" x2="975.5" y2="652.5"/><line x1="879.5" y1="515.5" x2="911.5" y2="515.5"/><line x1="553.5" y1="546.5" x2="655.5" y2="546.5"/><line x1="687.5" y1="546.5" x2="1014.5" y2="546.5"/><line x1="553.5" y1="562.5" x2="687.5" y2="562.5"/><line x1="671" y1="594.5" x2="960" y2="594.5"/><line x1="553.5" y1="611.5" x2="671" y2="611.5"/><line x1="552.5" y1="626.5" x2="1014.5" y2="626.5"/><line x1="552.5" y1="642.5" x2="911.5" y2="642.5"/><line x1="780" y1="650.5" x2="879.5" y2="650.5"/><line x1="780" y1="610.5" x2="879.5" y2="610.5"/><line x1="780" y1="618.5" x2="953.5" y2="618.5"/><line x1="925.5" y1="562.5" x2="1014.5" y2="562.5"/><line x1="918.5" y1="578.5" x2="1014.5" y2="578.5"/><line x1="655.5" y1="530.5" x2="655.5" y2="652.5"/><line x1="671.5" y1="530.5" x2="671.5" y2="652.5"/><line x1="687.5" y1="530.5" x2="687.5" y2="652.5"/><line x1="719.5" y1="530.5" x2="719.5" y2="652.5"/><line x1="751.5" y1="530.5" x2="751.5" y2="652.5"/><line x1="767.5" y1="530.5" x2="767.5" y2="652.5"/><line x1="655.5" y1="562.5" x2="687.5" y2="530.5"/><line x1="677.5" y1="611" x2="677.5" y2="652.5"/><line x1="684.5" y1="611" x2="684.5" y2="652.5"/><line x1="696.5" y1="611" x2="696.5" y2="652.5"/><line x1="701.5" y1="611" x2="701.5" y2="652.5"/><line x1="705.5" y1="611" x2="705.5" y2="652.5"/><line x1="712.5" y1="611" x2="712.5" y2="652.5"/><line x1="715.5" y1="611" x2="715.5" y2="652.5"/><line x1="723.5" y1="611" x2="723.5" y2="652.5"/><line x1="741.5" y1="611" x2="741.5" y2="652.5"/><line x1="677" y1="611.5" x2="751" y2="611.5"/><line x1="918.5" y1="531" x2="918.5" y2="652.5"/><line x1="925.5" y1="531" x2="925.5" y2="652.5"/><line x1="929.5" y1="531" x2="929.5" y2="652.5"/><line x1="938.5" y1="531" x2="938.5" y2="652.5"/><line x1="943.5" y1="531" x2="943.5" y2="652.5"/><line x1="947.5" y1="531" x2="947.5" y2="652.5"/><line x1="965.5" y1="531" x2="965.5" y2="652.5"/><line x1="831.5" y1="594.5" x2="831.5" y2="626.5"/><line x1="799.5" y1="594.5" x2="799.5" y2="626.5"/></g>
<g stroke="#b060f0" fill="none"><line x1="687.5" y1="409.5" x2="687.5" y2="530.5"/><line x1="737.5" y1="409.5" x2="737.5" y2="530.5"/><polyline points="553,602.5 575.5,602.5 575.5,652"/></g>
<line x1="552" y1="530.5" x2="1015" y2="530.5" stroke="#d84848"/>
<line x1="783.5" y1="409" x2="783.5" y2="653" stroke="#2f86d6"/>
<g fill="none" stroke="#10e010" stroke-width="1.2">
<rect x="735.5" y="475.5" width="32" height="55"/>
<rect x="783.5" y="459.5" width="64" height="63.5"/>
<rect x="783.5" y="554.5" width="64" height="72"/>
<rect x="607.5" y="634.5" width="32" height="20"/>
</g>
<rect x="799.5" y="538.5" width="32" height="55.5" fill="none" stroke="#1a1ac8" stroke-width="1.2"/>
<circle cx="607" cy="597.5" r="44.5" fill="#a0a0a0" fill-opacity="0.42" stroke="#c8c8c8" stroke-width="1"/>
<line x1="607" y1="628.5" x2="607" y2="570" stroke="#1890f0" stroke-width="3"/>
<polygon points="607,560 600,573 614,573" fill="#20a0ff"/>
<line x1="576" y1="597.5" x2="635" y2="597.5" stroke="#ff4a10" stroke-width="3"/>
<polygon points="645.5,597.5 632,590.5 632,604.5" fill="#e04008"/>
<rect x="552.5" y="409.5" width="462" height="243" fill="none" stroke="#3a5a86" stroke-width="1"/>
</svg>

<div id="blk3" class="abs"></div>
<div id="contab" class="abs"></div>
<div class="abs tb" style="left:11px;top:662px;color:#2c4468;letter-spacing:-0.2px">Console</div>
<div class="abs tb" style="left:71px;top:662px;color:#3c3c3c;letter-spacing:-0.2px">Issues</div>

<div id="blk4" class="abs"></div>
<div id="console" class="abs">
<div class="cl" style="letter-spacing:0.01px;top:-1px">Renderer info: Parallels using AMD Radeon HD 6970M OpenGL Engine version 2.1 ATI-1.40.15 from Parallels and ATI Technologies Inc.</div>
<div class="cl" style="letter-spacing:0.19px;top:16px">Depth buffer bits: 24</div>
<div class="cl" style="letter-spacing:0.2px;top:33px">Multisampling disabled</div>
<div class="cl" style="letter-spacing:0.36px;top:50px">Loading document from /media/psf/Home/Documents/Maps/Return to Zero/rtz_q1.map</div>
<div class="cl" style="letter-spacing:0.22px;top:67px">Loaded entity definition file Quake.fgd</div>
<div class="cl" style="letter-spacing:0.13px;top:84px;color:#8a8a8a">Cleared entity models</div>
</div>
<div class="abs" style="left:1000px;top:687px;width:15px;height:106px;background:#ececec"></div>
<div class="abs" style="left:1003px;top:690px;width:10px;height:51px;background:linear-gradient(90deg,#d8d8d8,#e8e8e8);border:1px solid #8c8c8c;border-radius:5px"></div>
<div id="vsep" class="abs"></div>
<div id="rp" class="abs"></div>
<div class="abs" style="left:1017px;top:82px;width:350px;height:33px;background:#d0d0d0"></div>
<div class="abs" style="left:1017px;top:115px;width:350px;height:1px;background:#000"></div>
<div class="abs" style="left:1017px;top:116px;width:350px;height:21px;background:#d0d0d0"></div>
<div class="abs" style="left:1017px;top:137px;width:350px;height:1px;background:#000"></div>
<div class="abs" style="left:1017px;top:176px;width:350px;height:1px;background:#000"></div>
<div class="abs tb" style="left:1027px;top:90px;color:#2c4468">Map</div>
<div class="abs tb" style="left:1064px;top:90px;color:#3c3c3c">Entity</div>
<div class="abs tb" style="left:1111px;top:90px;color:#3c3c3c">Face</div>
<div class="abs tb" style="left:1019px;top:118px;color:#3c3c3c">Layers</div>
<div class="abs tb" style="left:1019px;top:140px;color:#101010;letter-spacing:0.3px">Default Layer</div>
<svg class="abs" style="left:1018px;top:157px" width="32" height="16" viewBox="0 0 32 16">
<path d="M2.5,8 Q9,1.5 15.5,8 Q9,14.5 2.5,8 Z" fill="none" stroke="#333" stroke-width="1.1"/>
<circle cx="9" cy="8" r="2" fill="#333"/>
<path d="M24,7.5 V5.5 a2.5,2.5 0 0 1 5,0" fill="none" stroke="#333" stroke-width="1.1"/>
<rect x="22" y="8" width="6.5" height="6" rx="0.8" fill="none" stroke="#333" stroke-width="1.1"/>
<rect x="24.6" y="10.2" width="1.4" height="1.6" fill="#333"/>
</svg>
<div class="abs" style="left:1051px;top:157px;color:#1a1a1a">1079 objects</div>
<svg class="abs" style="left:1022px;top:746px" width="70" height="16" viewBox="0 0 70 16">
<path d="M4,8.5 H13 M8.5,4 V13" stroke="#111" stroke-width="2"/>
<path d="M30,8.5 H38" stroke="#b4b4b4" stroke-width="1.6"/>
<path d="M54,8.5 Q60,2.5 67,8.5 Q60,14.5 54,8.5 Z" fill="none" stroke="#333" stroke-width="1.1"/>
<circle cx="60.5" cy="8.5" r="2" fill="#333"/>
</svg>
<div class="abs" style="left:1017px;top:770px;width:350px;height:1px;background:#000"></div>
<div class="abs" style="left:1017px;top:771px;width:350px;height:22px;background:#d0d0d0"></div>
<div class="abs tb" style="left:1019px;top:773px;color:#3c3c3c">Mods</div>
<div class="abs" style="left:1330px;top:773px;color:#dadada;font-weight:bold">show</div>
<div class="abs" style="left:1367px;top:3px;width:1px;height:790px;background:#8a8a8a"></div>
<div class="abs" style="left:1364px;top:0;width:4px;height:3px;background:#000"></div>
<div class="abs" style="left:0;top:0;width:3px;height:3px;background:#000"></div>

<div id="leftedge" class="abs"></div>
</body></html>
